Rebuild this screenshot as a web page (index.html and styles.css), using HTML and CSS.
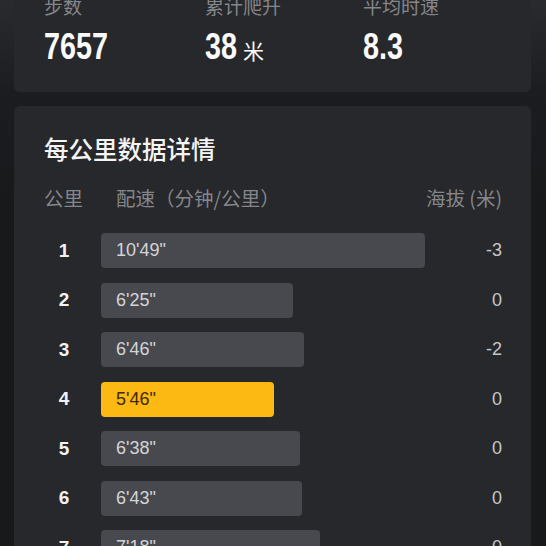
FILE: index.html
```html
<!DOCTYPE html>
<html lang="zh-CN">
<head>
  <meta charset="UTF-8">
  <meta name="viewport" content="width=device-width, initial-scale=1.0">
  <title>每公里数据详情</title>
  <link rel="stylesheet" href="styles.css">
</head>
<body>

  <div class="page">

    <div class="card summary">
      <div class="stat">
        <div class="stat-label">步数</div>
        <div class="stat-value"><span class="num">7657</span></div>
      </div>
      <div class="stat">
        <div class="stat-label">累计爬升</div>
        <div class="stat-value"><span class="num">38</span><span class="unit">米</span></div>
      </div>
      <div class="stat">
        <div class="stat-label">平均时速</div>
        <div class="stat-value"><span class="num">8.3</span></div>
      </div>
    </div>

    <div class="card splits">
      <div class="splits-title">每公里数据详情</div>

      <div class="splits-head">
        <span class="col-km">公里</span>
        <span class="col-pace">配速（分钟/公里）</span>
        <span class="col-alt">海拔 (米)</span>
      </div>

      <ul class="split-list">
        <li class="split">
          <span class="km">1</span>
          <div class="bar-wrap"><div class="bar" style="width: 324px">10'49"</div></div>
          <span class="alt">-3</span>
        </li>
        <li class="split">
          <span class="km">2</span>
          <div class="bar-wrap"><div class="bar" style="width: 192px">6'25"</div></div>
          <span class="alt">0</span>
        </li>
        <li class="split">
          <span class="km">3</span>
          <div class="bar-wrap"><div class="bar" style="width: 203px">6'46"</div></div>
          <span class="alt">-2</span>
        </li>
        <li class="split">
          <span class="km">4</span>
          <div class="bar-wrap"><div class="bar fastest" style="width: 173px">5'46"</div></div>
          <span class="alt">0</span>
        </li>
        <li class="split">
          <span class="km">5</span>
          <div class="bar-wrap"><div class="bar" style="width: 199px">6'38"</div></div>
          <span class="alt">0</span>
        </li>
        <li class="split">
          <span class="km">6</span>
          <div class="bar-wrap"><div class="bar" style="width: 201px">6'43"</div></div>
          <span class="alt">0</span>
        </li>
        <li class="split">
          <span class="km">7</span>
          <div class="bar-wrap"><div class="bar" style="width: 219px">7'18"</div></div>
          <span class="alt">0</span>
        </li>
      </ul>
    </div>

  </div>

</body>
</html>
```

FILE: styles.css
```css
body {
  margin: 0;
  padding: 0;
  width: 546px;
  height: 546px;
  overflow: hidden;
  font-family: "Liberation Sans", "Noto Sans CJK SC", sans-serif;
  background: linear-gradient(to bottom, #2a2b2e 0px, #1c1d20 90px, #18191b 200px);
  color: #f2f2f3;
}

.page {
  padding: 0 15px 0 14px;
}

.card {
  background-color: #26282c;
  border-radius: 6px;
}

/* top summary */
.summary {
  margin-top: -20px;
  padding: 14.5px 30px 25.5px;
  display: grid;
  grid-template-columns: 161px 158px 1fr;
}

.stat-label {
  font-size: 19px;
  line-height: 26px;
  color: #85868a;
}

.stat-value {
  margin-top: 6px;
  height: 40px;
  font-weight: bold;
  font-size: 36px;
  line-height: 40px;
  color: #fafafa;
  white-space: nowrap;
}

.num {
  display: inline-block;
  transform: scaleX(0.8);
  transform-origin: left center;
}

.unit {
  margin-left: -2px;
  font-family: "Noto Sans CJK SC", sans-serif;
  font-weight: normal;
  font-size: 21px;
  line-height: 1;
}

/* per km splits */
.splits {
  margin-top: 14px;
  padding: 27px 29px 20px 30px;
}

.splits-title {
  font-family: "Noto Sans CJK SC", sans-serif;
  font-size: 24.5px;
  font-weight: 500;
  line-height: 32px;
  color: #f4f4f5;
}

.splits-head {
  margin-top: 20px;
  display: flex;
  font-family: "Noto Sans CJK SC", sans-serif;
  font-size: 19.5px;
  line-height: 26px;
  color: #85868a;
}

.col-km {
  width: 72px;
}

.col-pace {
  flex: 1;
}

.split-list {
  list-style: none;
  margin: 22px 0 0;
  padding: 0;
  display: flex;
  flex-direction: column;
  gap: 14.5px;
}

.split {
  display: flex;
  align-items: center;
  height: 35px;
}

.km {
  width: 40px;
  margin-right: 17px;
  text-align: center;
  font-weight: bold;
  font-size: 19px;
  color: #f2f2f3;
}

.bar-wrap {
  flex: 1;
}

.bar {
  box-sizing: border-box;
  height: 35px;
  line-height: 35px;
  padding-left: 15px;
  border-radius: 4px;
  background-color: #48494e;
  font-size: 18px;
  color: #d4d4d6;
}

.bar.fastest {
  background-color: #fdb913;
  color: #3e2a00;
}

.alt {
  font-size: 18px;
  color: #c6c6c8;
  text-align: right;
}
```
